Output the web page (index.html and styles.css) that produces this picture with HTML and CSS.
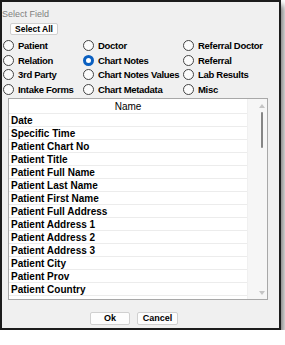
FILE: index.html
```html
<!DOCTYPE html>
<html lang="en">
<head>
    <meta charset="UTF-8">
    <title>Select Field</title>
    <link rel="stylesheet" href="styles.css">
</head>
<body>
    <div class="dialog">
        <div class="title">Select Field</div>
        <button class="btn select-all">Select All</button>

        <div class="radios">
            <label class="radio"><span class="dot"></span>Patient</label>
            <label class="radio"><span class="dot"></span>Doctor</label>
            <label class="radio"><span class="dot"></span>Referral Doctor</label>
            <label class="radio"><span class="dot"></span>Relation</label>
            <label class="radio checked"><span class="dot"></span>Chart Notes</label>
            <label class="radio"><span class="dot"></span>Referral</label>
            <label class="radio"><span class="dot"></span>3rd Party</label>
            <label class="radio"><span class="dot"></span>Chart Notes Values</label>
            <label class="radio"><span class="dot"></span>Lab Results</label>
            <label class="radio"><span class="dot"></span>Intake Forms</label>
            <label class="radio"><span class="dot"></span>Chart Metadata</label>
            <label class="radio"><span class="dot"></span>Misc</label>
        </div>

        <div class="list">
            <div class="list-body">
                <div class="list-head">Name</div>
                <div class="row">Date</div>
                <div class="row">Specific Time</div>
                <div class="row">Patient Chart No</div>
                <div class="row">Patient Title</div>
                <div class="row">Patient Full Name</div>
                <div class="row">Patient Last Name</div>
                <div class="row">Patient First Name</div>
                <div class="row">Patient Full Address</div>
                <div class="row">Patient Address 1</div>
                <div class="row">Patient Address 2</div>
                <div class="row">Patient Address 3</div>
                <div class="row">Patient City</div>
                <div class="row">Patient Prov</div>
                <div class="row">Patient Country</div>
            </div>
            <div class="scrollbar">
                <span class="arrow up"></span>
                <span class="thumb"></span>
                <span class="spacer"></span>
                <span class="arrow down"></span>
            </div>
        </div>

        <div class="actions">
            <button class="btn">Ok</button>
            <button class="btn">Cancel</button>
        </div>
    </div>
</body>
</html>
```

FILE: styles.css
```css
body {
    margin: 0;
    background: #ffffff;
    font-family: "Liberation Sans", Arial, sans-serif;
    color: #000;
}
.dialog {
    box-sizing: border-box;
    width: 281px;
    height: 330px;
    border: 2px solid #1c1c1c;
    background: #f0f0f0;
    box-shadow: 3px 5px 6px rgba(0,0,0,0.5);
}
.title {
    padding-top: 7px;
    font-size: 9px;
    line-height: 10px;
    color: #808080;
}
.btn {
    display: block;
    box-sizing: border-box;
    height: 13px;
    padding: 0;
    border: 1px solid #d0d0d0;
    border-radius: 2px;
    background: #fdfdfd;
    font-family: "Liberation Sans", Arial, sans-serif;
    font-weight: bold;
    font-size: 9px;
    line-height: 11px;
    color: #000;
}
.select-all {
    width: 48px;
    height: 12px;
    margin: 4px 0 0 8px;
    font-size: 8.5px;
    line-height: 10px;
}
.radios {
    display: grid;
    grid-template-columns: 80px 100px 1fr;
    grid-template-rows: 15px 14px 15px 14px;
    margin-top: 3px;
    padding-left: 1px;
}
.radio {
    display: flex;
    align-items: center;
    gap: 4px;
    font-size: 9.5px;
    font-weight: bold;
    letter-spacing: -0.3px;
    white-space: nowrap;
}
.dot {
    box-sizing: border-box;
    width: 11px;
    height: 11px;
    border: 1px solid #444;
    border-radius: 50%;
    background: #fbfbfb;
    flex: none;
}
.radio.checked .dot {
    border: 3px solid #0a5fc0;
    background: #fff;
}
.list {
    display: flex;
    box-sizing: border-box;
    width: 260px;
    height: 202px;
    margin: 2px 0 0 6px;
    border: 1px solid #a8a8a8;
    background: #fff;
}
.list-body {
    flex: 1;
}
.list-head {
    height: 14px;
    border-bottom: 1px solid #ececec;
    text-align: center;
    font-size: 10px;
    line-height: 15px;
}
.row {
    height: 12px;
    padding-left: 2px;
    border-bottom: 1px solid #ececec;
    font-size: 10px;
    font-weight: bold;
    line-height: 13px;
}
.scrollbar {
    display: flex;
    flex-direction: column;
    align-items: center;
    width: 20px;
    padding-left: 8px;
    box-sizing: border-box;
    background: #f6f6f6;
    border-left: 1px solid #f0f0f0;
}
.arrow {
    width: 0;
    height: 0;
    border-left: 3px solid transparent;
    border-right: 3px solid transparent;
}
.arrow.up {
    margin-top: 5px;
    border-bottom: 4px solid #c4c4c4;
}
.arrow.down {
    margin-bottom: 4px;
    border-top: 4px solid #c4c4c4;
}
.thumb {
    width: 2px;
    height: 36px;
    margin-top: 4px;
    border-radius: 1px;
    background: #858585;
}
.spacer {
    flex: 1;
}
.actions {
    display: flex;
    gap: 7px;
    margin: 12px 0 0 88px;
}
.actions .btn:first-child {
    width: 40px;
}
.actions .btn:last-child {
    width: 41px;
}
```
